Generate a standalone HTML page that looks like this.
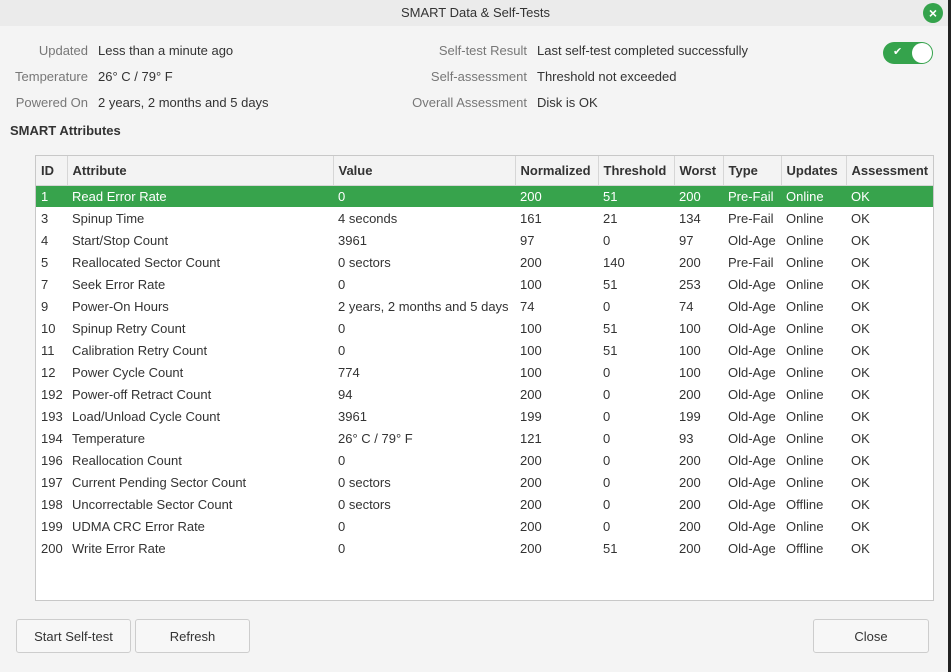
<!DOCTYPE html>
<html><head><meta charset="utf-8"><style>
*{margin:0;padding:0;box-sizing:border-box}
body{width:951px;height:672px;background:#f4f4f4;font-family:"Liberation Sans","DejaVu Sans",sans-serif;font-size:13px;color:#333;position:relative;overflow:hidden}
.title{position:absolute;left:0;top:0;width:951px;height:26px;background:#ebebeb;text-align:center;line-height:26px;color:#333}
.x{position:absolute;left:923px;top:3px;width:20px;height:20px;border-radius:50%;background:#35a34c;color:#fff;text-align:center;line-height:20px;font-size:14px;font-weight:bold}
.edge{position:absolute;right:0;top:0;width:3px;height:672px;background:#222}
.l{position:absolute;text-align:right;color:#777}
.v{position:absolute;color:#333}
.tog{position:absolute;left:883px;top:42px;width:50px;height:22px;border-radius:11px;background:#35a34c}
.tog .k{position:absolute;right:1px;top:1px;width:20px;height:20px;border-radius:50%;background:#fff}
.tog .c{position:absolute;left:10px;top:3px;color:#fff;font-size:11px}
h3{position:absolute;left:10px;top:123px;font-size:13px;font-weight:bold;color:#333}
.box{position:absolute;left:35px;top:155px;width:899px;height:446px;background:#fff;border:1px solid #c8c8c8}
table{border-collapse:collapse;table-layout:fixed;width:897px}
th{height:29px;padding-top:1px;background:#f3f3f3;font-weight:bold;text-align:left;padding-left:5px;border-right:1px solid #d6d6d6;border-bottom:1px solid #d6d6d6;color:#333;white-space:nowrap}
th:last-child{border-right:none}
td{height:22px;padding-left:5px;padding-top:1px;white-space:nowrap;overflow:hidden;color:#333}
tr.sel td{background:#37a34c;color:#fff}
.btn{position:absolute;top:619px;height:34px;border:1px solid #cdcdcd;border-radius:3px;background:#f7f7f7;text-align:center;line-height:33px;color:#333}
</style></head><body>
<div class="title">SMART Data &amp; Self-Tests</div>
<div class="x">×</div>
<div class="l" style="right:863px;top:43px">Updated</div><div class="v" style="left:98px;top:43px">Less than a minute ago</div>
<div class="l" style="right:863px;top:69px">Temperature</div><div class="v" style="left:98px;top:69px">26° C / 79° F</div>
<div class="l" style="right:863px;top:95px">Powered On</div><div class="v" style="left:98px;top:95px">2 years, 2 months and 5 days</div>
<div class="l" style="right:424px;top:43px">Self-test Result</div><div class="v" style="left:537px;top:43px">Last self-test completed successfully</div>
<div class="l" style="right:424px;top:69px">Self-assessment</div><div class="v" style="left:537px;top:69px">Threshold not exceeded</div>
<div class="l" style="right:424px;top:95px">Overall Assessment</div><div class="v" style="left:537px;top:95px">Disk is OK</div>
<div class="tog"><span class="c">✔</span><div class="k"></div></div>
<h3>SMART Attributes</h3>
<div class="box"><table>
<colgroup><col style="width:31px"><col style="width:266px"><col style="width:182px"><col style="width:83px"><col style="width:76px"><col style="width:49px"><col style="width:58px"><col style="width:65px"><col style="width:87px"></colgroup>
<tr><th>ID</th><th>Attribute</th><th>Value</th><th>Normalized</th><th>Threshold</th><th>Worst</th><th>Type</th><th>Updates</th><th>Assessment</th></tr>
<tr class="sel"><td>1</td><td>Read Error Rate</td><td>0</td><td>200</td><td>51</td><td>200</td><td>Pre-Fail</td><td>Online</td><td>OK</td></tr>
<tr><td>3</td><td>Spinup Time</td><td>4 seconds</td><td>161</td><td>21</td><td>134</td><td>Pre-Fail</td><td>Online</td><td>OK</td></tr>
<tr><td>4</td><td>Start/Stop Count</td><td>3961</td><td>97</td><td>0</td><td>97</td><td>Old-Age</td><td>Online</td><td>OK</td></tr>
<tr><td>5</td><td>Reallocated Sector Count</td><td>0 sectors</td><td>200</td><td>140</td><td>200</td><td>Pre-Fail</td><td>Online</td><td>OK</td></tr>
<tr><td>7</td><td>Seek Error Rate</td><td>0</td><td>100</td><td>51</td><td>253</td><td>Old-Age</td><td>Online</td><td>OK</td></tr>
<tr><td>9</td><td>Power-On Hours</td><td>2 years, 2 months and 5 days</td><td>74</td><td>0</td><td>74</td><td>Old-Age</td><td>Online</td><td>OK</td></tr>
<tr><td>10</td><td>Spinup Retry Count</td><td>0</td><td>100</td><td>51</td><td>100</td><td>Old-Age</td><td>Online</td><td>OK</td></tr>
<tr><td>11</td><td>Calibration Retry Count</td><td>0</td><td>100</td><td>51</td><td>100</td><td>Old-Age</td><td>Online</td><td>OK</td></tr>
<tr><td>12</td><td>Power Cycle Count</td><td>774</td><td>100</td><td>0</td><td>100</td><td>Old-Age</td><td>Online</td><td>OK</td></tr>
<tr><td>192</td><td>Power-off Retract Count</td><td>94</td><td>200</td><td>0</td><td>200</td><td>Old-Age</td><td>Online</td><td>OK</td></tr>
<tr><td>193</td><td>Load/Unload Cycle Count</td><td>3961</td><td>199</td><td>0</td><td>199</td><td>Old-Age</td><td>Online</td><td>OK</td></tr>
<tr><td>194</td><td>Temperature</td><td>26° C / 79° F</td><td>121</td><td>0</td><td>93</td><td>Old-Age</td><td>Online</td><td>OK</td></tr>
<tr><td>196</td><td>Reallocation Count</td><td>0</td><td>200</td><td>0</td><td>200</td><td>Old-Age</td><td>Online</td><td>OK</td></tr>
<tr><td>197</td><td>Current Pending Sector Count</td><td>0 sectors</td><td>200</td><td>0</td><td>200</td><td>Old-Age</td><td>Online</td><td>OK</td></tr>
<tr><td>198</td><td>Uncorrectable Sector Count</td><td>0 sectors</td><td>200</td><td>0</td><td>200</td><td>Old-Age</td><td>Offline</td><td>OK</td></tr>
<tr><td>199</td><td>UDMA CRC Error Rate</td><td>0</td><td>200</td><td>0</td><td>200</td><td>Old-Age</td><td>Online</td><td>OK</td></tr>
<tr><td>200</td><td>Write Error Rate</td><td>0</td><td>200</td><td>51</td><td>200</td><td>Old-Age</td><td>Offline</td><td>OK</td></tr>
</table></div>
<div class="btn" style="left:16px;width:115px">Start Self-test</div>
<div class="btn" style="left:135px;width:115px">Refresh</div>
<div class="btn" style="left:813px;width:116px">Close</div>
<div class="edge"></div>
</body></html>
